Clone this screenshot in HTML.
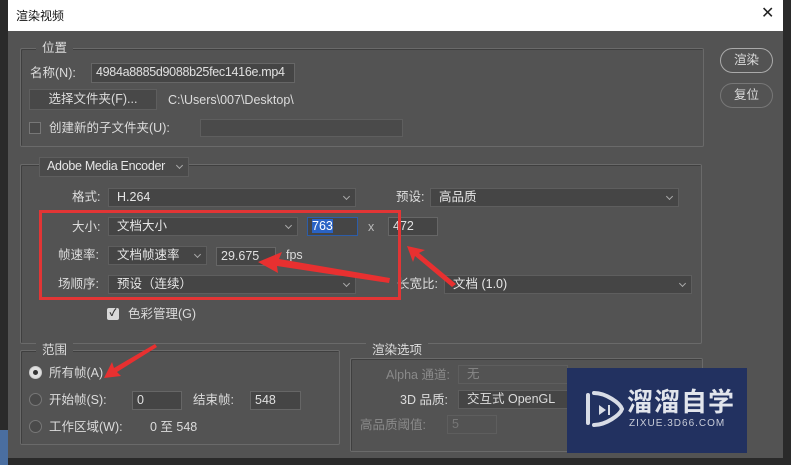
<!DOCTYPE html>
<html><head><meta charset="utf-8"><style>
*{margin:0;padding:0;box-sizing:border-box}
body{width:791px;height:465px;background:#2a2a2a;position:relative;overflow:hidden;font-family:"Liberation Sans","Noto Sans CJK SC",sans-serif;font-size:12.5px;color:#dcdcdc}
.a{position:absolute}
.t{position:absolute;white-space:nowrap;line-height:16px}
.fs{position:absolute;border:1px solid #6a6a6a;border-radius:2px;box-shadow:inset 1px 1px 0 #3f3f3f}
.inp{position:absolute;background:#454545;border:1px solid #666;color:#e0e0e0;padding-left:4px;line-height:17px;white-space:nowrap}
.sel{position:absolute;background:#454545;border:1px solid #5e5e5e;color:#e6e6e6;padding-left:8px;line-height:17px;white-space:nowrap}
.sel::after{content:"";position:absolute;right:6px;top:5px;width:4px;height:4px;border-right:1px solid #aaa;border-bottom:1px solid #aaa;transform:rotate(45deg)}
.lg{position:absolute;background:#535353;padding:0 6px;line-height:16px}
.rd{position:absolute;width:13px;height:13px;border-radius:50%;border:1px solid #777;background:#4a4a4a}
</style></head><body>
<div class="a" style="left:8px;top:0;width:775px;height:458px;background:#535353"></div>
<div class="a" style="left:8px;top:0;width:775px;height:31px;background:#fff"></div>
<div class="t" style="left:16px;top:8px;color:#111;font-size:12px">渲染视频</div>
<div class="t" style="left:761px;top:6px;color:#222;font-size:16px">✕</div>
<div class="a" style="left:0;top:430px;width:8px;height:35px;background:#4a6ea0"></div>

<div class="fs" style="left:20px;top:48px;width:684px;height:99px"></div>
<div class="lg" style="left:36px;top:40px">位置</div>
<div class="t" style="left:30px;top:65px">名称(N):</div>
<div class="inp" style="left:91px;top:63px;width:204px;height:20px;letter-spacing:-0.3px">4984a8885d9088b25fec1416e.mp4</div>
<div class="a" style="left:29px;top:89px;width:128px;height:21px;background:#484848;border:1px solid #5e5e5e;text-align:center;line-height:19px">选择文件夹(F)...</div>
<div class="t" style="left:168px;top:92px">C:\Users\007\Desktop\</div>
<div class="a" style="left:29px;top:122px;width:12px;height:12px;border:1px solid #777;background:#4a4a4a"></div>
<div class="t" style="left:49px;top:120px">创建新的子文件夹(U):</div>
<div class="a" style="left:200px;top:119px;width:203px;height:18px;background:#4a4a4a;border:1px solid #5e5e5e"></div>

<div class="a" style="left:720px;top:48px;width:53px;height:25px;border:1px solid #aaa;border-radius:13px;text-align:center;line-height:23px">渲染</div>
<div class="a" style="left:720px;top:83px;width:53px;height:25px;border:1px solid #777;border-radius:13px;text-align:center;line-height:23px">复位</div>

<div class="fs" style="left:20px;top:164px;width:682px;height:180px"></div>
<div class="sel" style="left:39px;top:157px;width:150px;height:20px;background:#4a4a4a;padding-left:7px;letter-spacing:-0.3px">Adobe Media Encoder</div>
<div class="t" style="left:72px;top:189px">格式:</div>
<div class="sel" style="left:108px;top:188px;width:248px;height:19px">H.264</div>
<div class="t" style="left:396px;top:189px">预设:</div>
<div class="sel" style="left:430px;top:188px;width:249px;height:19px">高品质</div>
<div class="t" style="left:72px;top:219px">大小:</div>
<div class="sel" style="left:108px;top:217px;width:190px;height:19px">文档大小</div>
<div class="inp" style="left:307px;top:217px;width:51px;height:19px;border-color:#2d5da8"><span style="background:#2a63c5;color:#fff">763</span></div>
<div class="t" style="left:368px;top:219px;color:#bbb">x</div>
<div class="inp" style="left:388px;top:217px;width:50px;height:19px">472</div>
<div class="t" style="left:58px;top:247px">帧速率:</div>
<div class="sel" style="left:108px;top:246px;width:99px;height:19px">文档帧速率</div>
<div class="inp" style="left:216px;top:247px;width:60px;height:19px">29.675</div>
<div class="t" style="left:286px;top:247px">fps</div>
<div class="t" style="left:58px;top:276px">场顺序:</div>
<div class="sel" style="left:108px;top:275px;width:248px;height:19px">预设（连续）</div>
<div class="t" style="left:397px;top:276px">长宽比:</div>
<div class="sel" style="left:444px;top:275px;width:248px;height:19px">文档 (1.0)</div>
<div class="a" style="left:107px;top:308px;width:12px;height:12px;background:#d8d8d8;border-radius:2px;color:#333;font-size:10px;line-height:12px;text-align:center;font-weight:bold">✓</div>
<div class="t" style="left:128px;top:306px">色彩管理(G)</div>

<div class="fs" style="left:20px;top:350px;width:320px;height:95px"></div>
<div class="lg" style="left:36px;top:342px">范围</div>
<div class="rd" style="left:29px;top:366px;background:#e0e0e0;border-color:#ccc"><div style="position:absolute;left:3px;top:3px;width:5px;height:5px;border-radius:50%;background:#333"></div></div>
<div class="t" style="left:49px;top:365px">所有帧(A)</div>
<div class="rd" style="left:29px;top:393px"></div>
<div class="t" style="left:49px;top:392px">开始帧(S):</div>
<div class="inp" style="left:132px;top:391px;width:50px;height:19px">0</div>
<div class="t" style="left:193px;top:392px">结束帧:</div>
<div class="inp" style="left:250px;top:391px;width:51px;height:19px">548</div>
<div class="rd" style="left:29px;top:420px"></div>
<div class="t" style="left:49px;top:419px">工作区域(W):</div>
<div class="t" style="left:150px;top:419px">0 至 548</div>

<div class="fs" style="left:350px;top:358px;width:353px;height:94px"></div>
<div class="lg" style="left:366px;top:342px">渲染选项</div>
<div class="t" style="left:386px;top:367px;color:#8a8a8a">Alpha 通道:</div>
<div class="a" style="left:458px;top:365px;width:110px;height:19px;border:1px solid #5e5e5e;color:#888;padding-left:8px;line-height:17px">无</div>
<div class="t" style="left:400px;top:392px">3D 品质:</div>
<div class="a" style="left:458px;top:390px;width:110px;height:19px;background:#454545;border:1px solid #5e5e5e;padding-left:8px;line-height:17px">交互式 OpenGL</div>
<div class="t" style="left:360px;top:417px;color:#8a8a8a">高品质阈值:</div>
<div class="a" style="left:447px;top:415px;width:50px;height:19px;border:1px solid #5e5e5e;color:#777;padding-left:4px;line-height:17px">5</div>

<div class="a" style="left:567px;top:368px;width:180px;height:85px;background:#223160"></div>
<svg class="a" style="left:580px;top:385px" width="50" height="50" viewBox="0 0 50 50"><path d="M8 10v28M14 8c12 0 26 10 28 16-2 6-16 16-28 16" fill="none" stroke="#d8dce6" stroke-width="4" stroke-linecap="round"/><path d="M19 20v10l7-5z" fill="#d8dce6"/><path d="M29 20v10" stroke="#d8dce6" stroke-width="2"/></svg>
<div class="t" style="left:627px;top:387px;font-size:26px;line-height:30px;color:#e2e5ec;font-weight:bold;letter-spacing:1px">溜溜自学</div>
<div class="t" style="left:629px;top:416px;font-size:10px;color:#c8ccd8;letter-spacing:1px">ZIXUE.3D66.COM</div>

<div class="a" style="left:39px;top:210px;width:362px;height:90px;border:3px solid #e23535"></div>
<svg class="a" style="left:0;top:0" width="791" height="465">
<path d="M258 262 L282 252 L279 259 L390 278 L389 283 L277 266 L278 273 Z" fill="#e83030"/>
<path d="M407 246 L425 250 L419 253 L456 284 L452 287 L415 256 L413 262 Z" fill="#e83030"/>
<path d="M104 378 L112 362 L114 368 L155 344 L157 347 L117 372 L121 376 Z" fill="#e83030"/>
</svg>
</body></html>
